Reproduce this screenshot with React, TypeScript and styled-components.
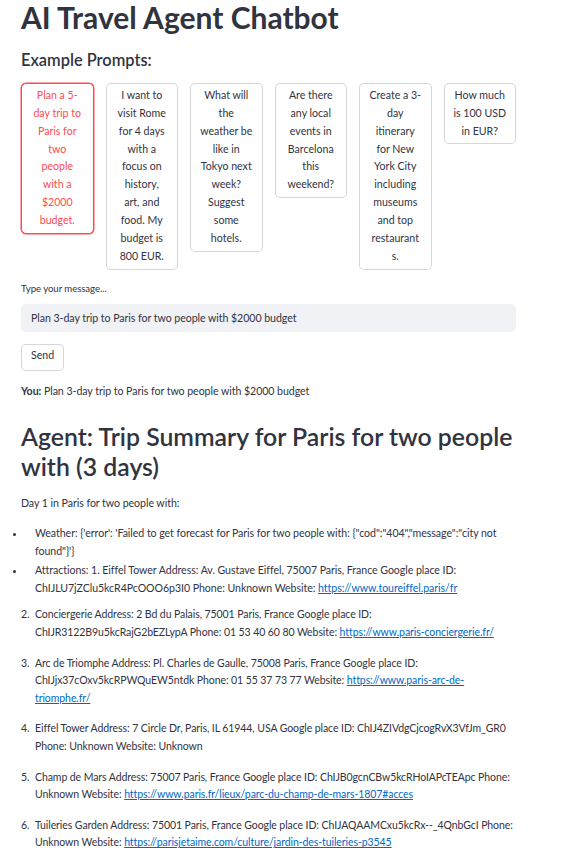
import { Fragment } from "react";
import styled, { createGlobalStyle } from "styled-components";

const GlobalStyle = createGlobalStyle`
  body {
    margin: 0;
    background: #ffffff;
    color: #31333f;
    font-family: Lato, "Noto Sans", sans-serif;
  }
`;

// lines as the buttons wrap them in the app
const prompts = [
  ["Plan a 5-", "day trip to", "Paris for", "two", "people", "with a", "$2000", "budget."],
  ["I want to", "visit Rome", "for 4 days", "with a", "focus on", "history,", "art, and", "food. My", "budget is", "800 EUR."],
  ["What will", "the", "weather be", "like in", "Tokyo next", "week?", "Suggest", "some", "hotels."],
  ["Are there", "any local", "events in", "Barcelona", "this", "weekend?"],
  ["Create a 3-", "day", "itinerary", "for New", "York City", "including", "museums", "and top", "restaurant", "s."],
  ["How much", "is 100 USD", "in EUR?"],
];

const places = [
  {
    text: "Conciergerie Address: 2 Bd du Palais, 75001 Paris, France Google place ID: ChIJR3122B9u5kcRajG2bEZLypA Phone: 01 53 40 60 80 Website: ",
    url: "https://www.paris-conciergerie.fr/",
  },
  {
    text: "Arc de Triomphe Address: Pl. Charles de Gaulle, 75008 Paris, France Google place ID: ChIJjx37cOxv5kcRPWQuEW5ntdk Phone: 01 55 37 73 77 Website: ",
    url: "https://www.paris-arc-de-triomphe.fr/",
  },
  {
    text: "Eiffel Tower Address: 7 Circle Dr, Paris, IL 61944, USA Google place ID: ChIJ4ZIVdgCjcogRvX3VfJm_GR0 Phone: Unknown Website: Unknown",
    url: "",
  },
  {
    text: "Champ de Mars Address: 75007 Paris, France Google place ID: ChIJB0gcnCBw5kcRHoIAPcTEApc Phone: Unknown Website: ",
    url: "https://www.paris.fr/lieux/parc-du-champ-de-mars-1807#acces",
  },
  {
    text: "Tuileries Garden Address: 75001 Paris, France Google place ID: ChIJAQAAMCxu5kcRx--_4QnbGcI Phone: Unknown Website: ",
    url: "https://parisjetaime.com/culture/jardin-des-tuileries-p3545",
  },
];

function App() {
  return (
    <Page>
      <GlobalStyle />
      <Title>AI Travel Agent Chatbot</Title>
      <SubTitle>Example Prompts:</SubTitle>
      <PromptGrid>
        {prompts.map((lines, i) => (
          <PromptButton key={lines[0]} $active={i === 0}>
            {lines.map((line, j) => (
              <Fragment key={j}>
                {j > 0 && <br />}
                {line}
              </Fragment>
            ))}
          </PromptButton>
        ))}
      </PromptGrid>

      <Label>Type your message...</Label>
      <MessageInput defaultValue="Plan 3-day trip to Paris for two people with $2000 budget" />
      <SendButton>Send</SendButton>

      <Para $top={12}>
        <strong>You:</strong> Plan 3-day trip to Paris for two people with $2000 budget
      </Para>

      <AgentHeading>Agent: Trip Summary for Paris for two people with (3 days)</AgentHeading>
      <Para $top={13}>Day 1 in Paris for two people with:</Para>

      <BulletList>
        <li>
          Weather: {"{'error': 'Failed to get forecast for Paris for two people with: {\"cod\":\"404\",\"message\":\"city not found\"}'}"}
        </li>
        <li>
          Attractions: 1. Eiffel Tower Address: Av. Gustave Eiffel, 75007 Paris, France Google place ID:
          ChIJLU7jZClu5kcR4PcOOO6p3I0 Phone: Unknown Website:{" "}
          <Link href="#">https://www.toureiffel.paris/fr</Link>
        </li>
      </BulletList>

      <NumberList start={2}>
        {places.map((p) => (
          <li key={p.text}>
            {p.text}
            {p.url && <Link href="#">{p.url}</Link>}
          </li>
        ))}
      </NumberList>
    </Page>
  );
}

const Page = styled.div`
  width: 495px;
  padding: 0 0 40px 21px;
  font-size: 10.6px;
  line-height: 17.6px;
  letter-spacing: -0.05px;
`;

const Title = styled.h1`
  margin: 0;
  font-size: 30px;
  line-height: 34px;
  font-weight: 700;
  letter-spacing: 0;
`;

const SubTitle = styled.h3`
  margin: 16px 0 0;
  font-size: 16.4px;
  line-height: 20px;
  font-weight: 600;
  letter-spacing: 0;
`;

const PromptGrid = styled.div`
  display: grid;
  grid-template-columns: repeat(6, 1fr);
  gap: 12px;
  align-items: start;
  margin-top: 13px;
`;

const PromptButton = styled.button<{ $active?: boolean }>`
  padding: 2.8px 6px;
  border: 1px solid ${(p) => (p.$active ? "#ff4b4b" : "rgba(49, 51, 63, 0.2)")};
  box-shadow: ${(p) => (p.$active ? "0 0 0 0.5px #ff4b4b" : "none")};
  border-radius: 5px;
  background: #ffffff;
  color: ${(p) => (p.$active ? "#ff4b4b" : "#31333f")};
  font-family: inherit;
  font-size: 10.6px;
  line-height: 17.92px;
  text-align: center;
  white-space: nowrap;
`;

const Label = styled.div`
  margin-top: 11px;
  font-size: 9.6px;
  line-height: 15px;
`;

const MessageInput = styled.input`
  display: block;
  box-sizing: border-box;
  width: 100%;
  height: 28px;
  margin-top: 8px;
  padding: 0 10px;
  border: none;
  border-radius: 5px;
  background: #f0f2f6;
  color: #31333f;
  font-family: inherit;
  font-size: 10.6px;
  letter-spacing: -0.05px;
  outline: none;
`;

const SendButton = styled.button`
  display: block;
  box-sizing: border-box;
  width: 43px;
  height: 27px;
  margin-top: 12px;
  padding: 0 0 4px;
  border: 1px solid rgba(49, 51, 63, 0.2);
  border-radius: 5px;
  background: #ffffff;
  color: #31333f;
  font-family: inherit;
  font-size: 10.6px;
`;

const Para = styled.p<{ $top: number }>`
  margin: ${(p) => p.$top}px 0 0;

  strong {
    font-weight: 700;
  }
`;

const AgentHeading = styled.h2`
  margin: 22px 0 0;
  font-size: 24.8px;
  line-height: 30px;
  font-weight: 600;
  letter-spacing: 0;
`;

const BulletList = styled.ul`
  margin: 12px 0 0 5px;
  padding: 0;
  list-style: disc outside;

  li {
    padding-left: 9px;
    margin-bottom: 2px;
  }
`;

const NumberList = styled.ol`
  margin: 9px 0 0;
  padding-left: 11px;
  font-size: 10.5px;
  letter-spacing: -0.08px;

  li {
    padding-left: 3px;
    margin-bottom: 13px;
  }
`;

const Link = styled.a`
  color: #0068c9;
  text-decoration: underline;
`;

export default App;
